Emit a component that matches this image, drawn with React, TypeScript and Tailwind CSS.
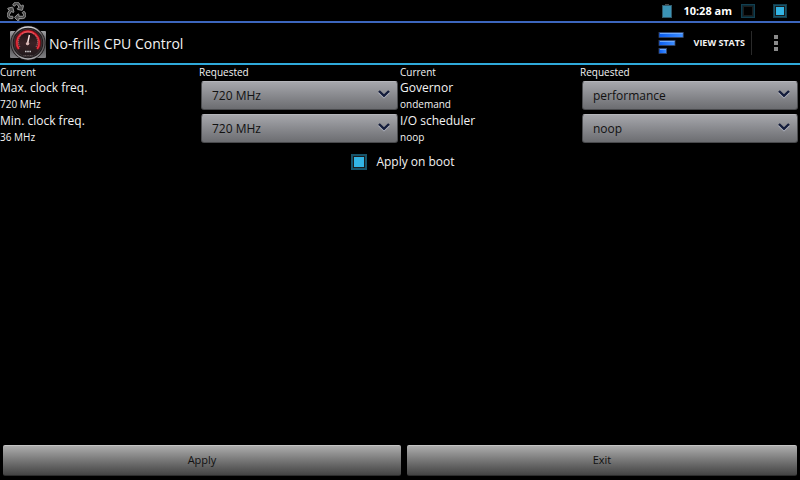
import { useState } from "react";
import { FaRecycle } from "react-icons/fa";

interface SettingProps {
  id: string;
  label: string;
  current: string;
  options: string[];
  initial: string;
}

function SpinnerArrow() {
  return (
    <svg className="pointer-events-none absolute right-2 top-2 h-3 w-3" viewBox="0 0 12 12" fill="none">
      <path d="M1 3.2L6 8L11 3.2" stroke="#b9bcc6" strokeWidth={2.2} />
      <path d="M1 2L6 6.8L11 2" stroke="#141d3c" strokeWidth={2.4} />
    </svg>
  );
}

function Setting({ id, label, current, options, initial }: SettingProps) {
  const [value, setValue] = useState(initial);

  return (
    <>
      <div className="h-[33px]">
        <label htmlFor={id} className="block text-[12px] leading-[18px] whitespace-nowrap">
          {label}
        </label>
        <p className="text-[10px] leading-[14px]">{current}</p>
      </div>
      <div className="h-[33px] px-0.5 pt-0.5">
        <div className="relative">
          <select
            id={id}
            value={value}
            onChange={(e) => setValue(e.target.value)}
            className="block h-[29px] w-full appearance-none rounded-[3px] border border-t-[#b4b5ba] border-x-[#4c4d50] border-b-[#48494c] bg-linear-to-b from-[#a6a7ac] to-[#6c6d71] pl-2.5 pr-6 text-[12px] text-[#111111]"
          >
            {options.map((option) => (
              <option key={option}>{option}</option>
            ))}
          </select>
          <SpinnerArrow />
        </div>
      </div>
    </>
  );
}

function StatusBox({ filled }: { filled?: boolean }) {
  return (
    <svg className="h-4 w-4" viewBox="0 0 16 16">
      <rect x="1" y="1" width="14" height="14" fill="#123f50" />
      <rect x="2" y="2" width="12" height="12" fill={filled ? "#17546a" : "#0c2a35"} />
      <rect x="3" y="3" width="10" height="10" fill="#1c1c1c" />
      <rect x="4" y="4" width="8" height="8" fill={filled ? "#33b5e5" : "#000000"} />
    </svg>
  );
}

function GaugeIcon() {
  return (
    <svg className="h-9 w-9 shrink-0" viewBox="0 0 36 36">
      <defs>
        <linearGradient id="plate" x1="0" y1="0" x2="0" y2="1">
          <stop offset="0" stopColor="#a0a0a3" />
          <stop offset="0.5" stopColor="#4c4c4f" />
          <stop offset="1" stopColor="#808083" />
        </linearGradient>
        <linearGradient id="rim" x1="0" y1="0" x2="0" y2="1">
          <stop offset="0" stopColor="#d8d8da" />
          <stop offset="0.25" stopColor="#5a5456" />
          <stop offset="0.75" stopColor="#6a6466" />
          <stop offset="1" stopColor="#b0b0b3" />
        </linearGradient>
        <linearGradient id="dial" x1="0" y1="0" x2="0" y2="1">
          <stop offset="0" stopColor="#170c0e" />
          <stop offset="0.5" stopColor="#3a2226" />
          <stop offset="1" stopColor="#1f191b" />
        </linearGradient>
      </defs>
      <rect y="6" width="36" height="27" rx="1" fill="url(#plate)" />
      <circle cx="18" cy="18" r="17.5" fill="#1c181a" />
      <circle cx="18" cy="18" r="16" fill="none" stroke="url(#rim)" strokeWidth={1.4} />
      <circle cx="18" cy="18" r="14" fill="url(#dial)" stroke="#3b3335" />
      <path d="M8.6 24A11.4 11.4 0 1 1 27.4 24" fill="none" stroke="#7a0f1a" strokeWidth={3} />
      <path d="M8.8 24A11.2 11.2 0 1 1 27.2 24" fill="none" stroke="#e8313c" strokeWidth={1.6} />
      <path d="M10 22A9.6 9.6 0 1 1 26 22" fill="none" stroke="#d9a0a2" strokeWidth={0.8} strokeDasharray="1 1" />
      <path d="M17.2 20L19.4 10" stroke="#ffe8e6" strokeWidth={1.4} />
      <circle cx="17.6" cy="18.6" r="1.7" fill="#d9b5b3" />
      <path d="M15 26.5h6" stroke="#c9c9cb" strokeWidth={1.6} strokeDasharray="1.2 0.4" />
      <path d="M13.5 30.5h9" stroke="#66585a" strokeDasharray="1 0.6" />
    </svg>
  );
}

function StatsIcon() {
  return (
    <svg className="h-6 w-[26px]" viewBox="0 0 26 24">
      <defs>
        <linearGradient id="bar" x1="0" y1="0" x2="1" y2="0">
          <stop offset="0" stopColor="#0a5cf0" />
          <stop offset="1" stopColor="#3f8fff" />
        </linearGradient>
      </defs>
      <g stroke="#3a4763" strokeWidth={0.8}>
        <rect x="1" y="1.4" width="24.2" height="5" fill="url(#bar)" />
        <rect x="1" y="9.4" width="16" height="5" fill="url(#bar)" />
        <rect x="1" y="17.4" width="7.6" height="5" fill="url(#bar)" />
      </g>
      <g fill="#6aa8ff">
        <rect x="2" y="2" width="22.6" height="1" />
        <rect x="2" y="10" width="14.4" height="1" />
        <rect x="2" y="18" width="6" height="1" />
      </g>
    </svg>
  );
}

export default function App() {
  const [onBoot, setOnBoot] = useState(true);

  return (
    <div className="flex min-h-screen flex-col bg-black font-['Open_Sans',sans-serif] text-[#f3f3f3]">
      {/* Status bar */}
      <div className="flex h-[23px] items-center border-b-2 border-[#3c66bd] pt-px pl-[7px] pr-3">
        <FaRecycle className="h-[19px] w-[19px] fill-[#4a4a4a] stroke-[#b0b0b0] stroke-[22]" />
        <svg className="ml-auto h-[14px] w-2.5" viewBox="0 0 10 14">
          <rect x="3" y="0" width="4" height="2" fill="#4a4a4a" />
          <rect x="0.5" y="1.5" width="9" height="12" fill="#3b93b5" stroke="#31596a" />
        </svg>
        <span className="ml-[11px] text-[11px] font-bold text-white">10:28 am</span>
        <div className="ml-2 flex gap-4">
          <StatusBox />
          <StatusBox filled />
        </div>
      </div>

      {/* Action bar */}
      <header className="flex h-[42px] items-center border-b-2 border-[#2fa9da] pl-2.5">
        <GaugeIcon />
        <h1 className="ml-[3px] text-[14px]">No-frills CPU Control</h1>
        <button type="button" className="ml-auto flex items-center gap-2.5 pr-1.5 text-[9px] font-bold">
          <StatsIcon />
          VIEW STATS
        </button>
        <button
          type="button"
          aria-label="More options"
          className="flex h-6 w-[49px] items-center justify-center border-l border-[#2a2a2a]"
        >
          <svg className="h-4 w-1" viewBox="0 0 4 16" fill="#8a8a8a">
            <rect width="4" height="4" />
            <rect y="6" width="4" height="4" />
            <rect y="12" width="4" height="4" />
          </svg>
        </button>
      </header>

      {/* Settings */}
      <main className="flex-1">
        <div className="grid grid-cols-[199fr_201fr_180fr_220fr]">
          <p className="text-[10px] leading-[14px]">Current</p>
          <p className="text-[10px] leading-[14px]">Requested</p>
          <p className="text-[10px] leading-[14px]">Current</p>
          <p className="text-[10px] leading-[14px]">Requested</p>
          <Setting
            id="max-freq"
            label="Max. clock freq."
            current="720 MHz"
            options={["36 MHz", "720 MHz"]}
            initial="720 MHz"
          />
          <Setting
            id="governor"
            label="Governor"
            current="ondemand"
            options={["ondemand", "performance"]}
            initial="performance"
          />
          <Setting
            id="min-freq"
            label="Min. clock freq."
            current="36 MHz"
            options={["36 MHz", "720 MHz"]}
            initial="720 MHz"
          />
          <Setting
            id="scheduler"
            label="I/O scheduler"
            current="noop"
            options={["noop", "deadline", "cfq"]}
            initial="noop"
          />
        </div>

        <label className="flex h-[34px] items-center justify-center gap-[9px] pl-1.5 text-[12px]">
          <input
            type="checkbox"
            checked={onBoot}
            onChange={(e) => setOnBoot(e.target.checked)}
            className="h-4 w-4 appearance-none border-2 border-[#17546a] bg-black inset-ring inset-ring-[#1c1c1c] checked:bg-[#33b5e5]"
          />
          Apply on boot
        </label>
      </main>

      {/* Footer buttons */}
      <footer className="grid grid-cols-[398fr_390fr] gap-1.5 px-[3px] pb-1">
        <button
          type="button"
          className="h-[31px] rounded-[2px] border-t border-b border-t-[#c4c4c4] border-b-[#2c2c2c] bg-linear-to-b from-[#adadad] to-[#444444] text-[11px] text-[#111111]"
        >
          Apply
        </button>
        <button
          type="button"
          className="h-[31px] rounded-[2px] border-t border-b border-t-[#c4c4c4] border-b-[#2c2c2c] bg-linear-to-b from-[#adadad] to-[#444444] text-[11px] text-[#111111]"
        >
          Exit
        </button>
      </footer>
    </div>
  );
}
